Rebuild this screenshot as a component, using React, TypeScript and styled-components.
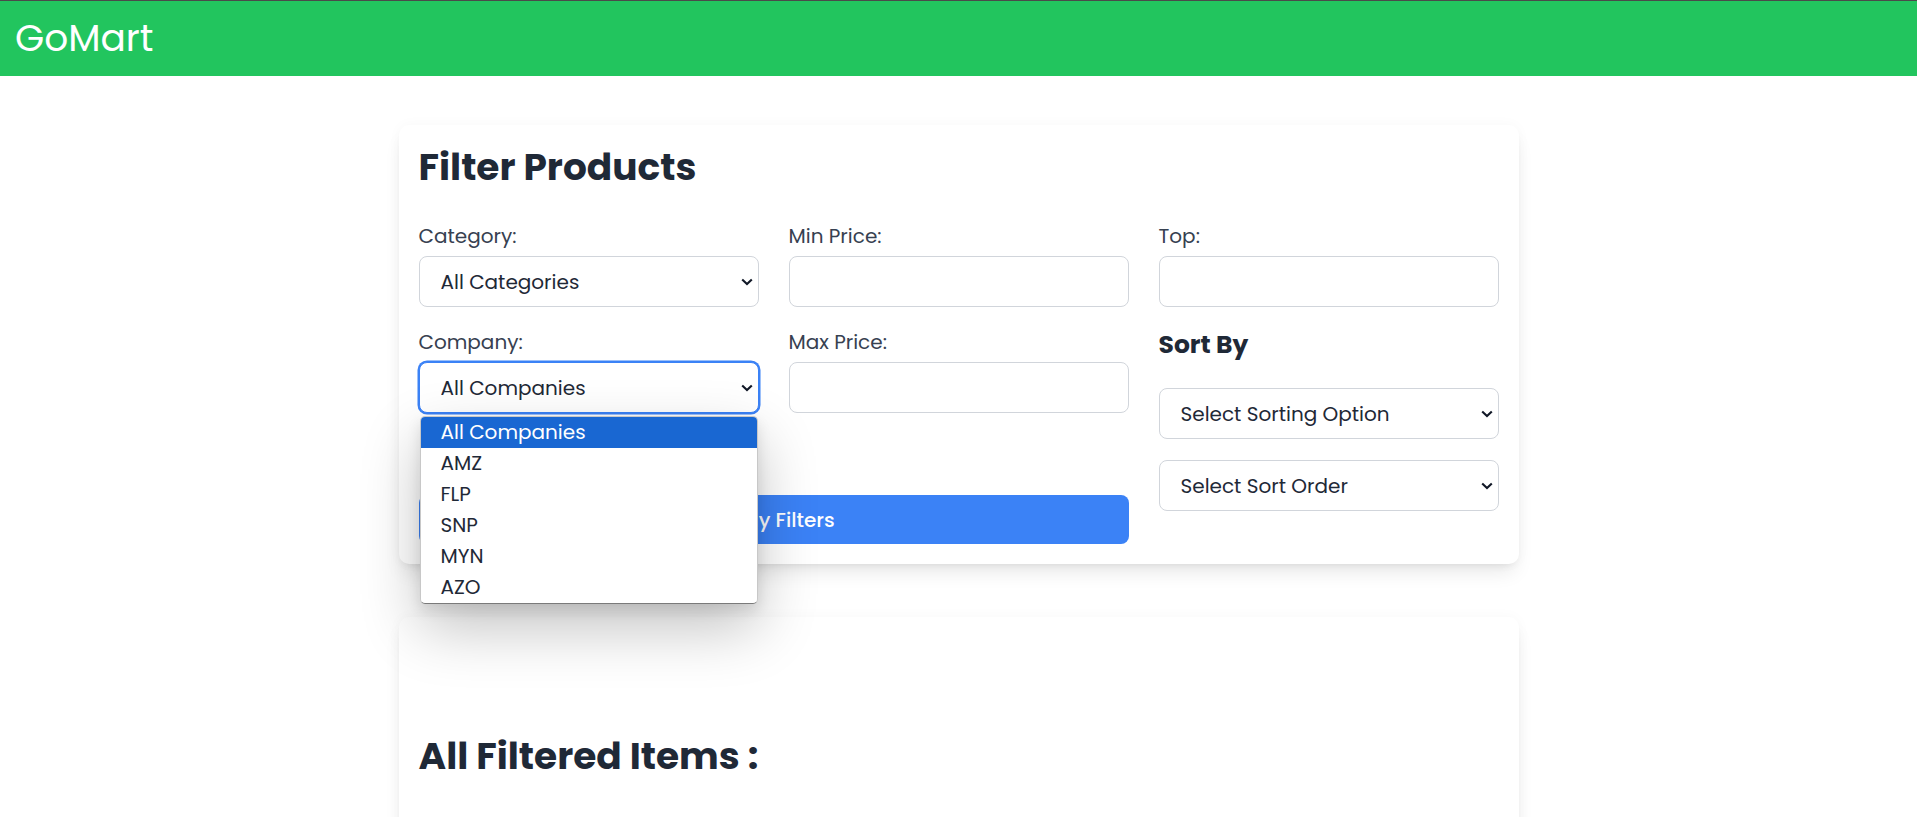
import React from "react";
import styled, { createGlobalStyle } from "styled-components";

const GlobalStyle = createGlobalStyle`
  * { box-sizing: border-box; }
  html, body { margin: 0; padding: 0; background: #ffffff; }
  body {
    font-family: "Poppins", "Inter", "Open Sans", sans-serif;
    color: #1f2937;
    overflow: hidden;
  }
`;

const Header = styled.header`
  height: 76px;
  border-top: 1px solid #4a4a4a;
  background: #22c55e;
  display: flex;
  align-items: center;
  padding: 0 15px;
`;

const Logo = styled.h1`
  margin: 0;
  font-size: 37.5px;
  font-weight: 400;
  line-height: 1;
  color: #ffffff;
`;

const Main = styled.main`
  width: 1120px;
  margin: 49px auto 0;
  display: flex;
  flex-direction: column;
  gap: 53px;
`;

const Card = styled.section<{ $tall?: boolean }>`
  background: #ffffff;
  border-radius: 10px;
  box-shadow: 0 12px 19px -4px rgba(0, 0, 0, 0.09), 0 5px 8px -5px rgba(0, 0, 0, 0.08),
    0 0 14px rgba(0, 0, 0, 0.03);
  padding: 20px;
  min-height: ${(p) => (p.$tall ? "400px" : "auto")};
`;

const CardTitle = styled.h2<{ $offset?: number }>`
  margin: ${(p) => p.$offset ?? 0}px 0 31px;
  font-size: 37.5px;
  font-weight: 700;
  line-height: 45px;
  color: #1f2937;
`;

const FilterGrid = styled.div`
  display: grid;
  grid-template-columns: repeat(3, 1fr);
  column-gap: 30px;
  align-items: start;
`;

const Column = styled.div<{ $span?: boolean }>`
  display: flex;
  flex-direction: column;
  grid-row: ${(p) => (p.$span ? "span 2" : "auto")};
`;

const Field = styled.div<{ $gap?: number }>`
  display: flex;
  flex-direction: column;
  margin-bottom: ${(p) => p.$gap ?? 20}px;
`;

const Label = styled.label`
  font-size: 20px;
  line-height: 30px;
  color: #374151;
  margin-bottom: 5px;
`;

const SubTitle = styled.h3`
  margin: 0 0 26px;
  font-size: 25px;
  line-height: 35px;
  font-weight: 700;
  color: #1f2937;
`;

const TextInput = styled.input`
  height: 51px;
  width: 100%;
  border: 1px solid #d1d5db;
  border-radius: 8px;
  background: #ffffff;
  font: inherit;
  font-size: 20px;
  padding: 0 20px;
  outline: none;
`;

const SelectWrap = styled.div`
  position: relative;
  width: 100%;
`;

const Select = styled.select<{ $focused?: boolean }>`
  appearance: none;
  -webkit-appearance: none;
  height: 51px;
  width: 100%;
  border: 1px solid ${(p) => (p.$focused ? "#3b82f6" : "#d1d5db")};
  box-shadow: ${(p) => (p.$focused ? "0 0 0 1.5px #3b82f6" : "none")};
  border-radius: 8px;
  background: #ffffff;
  font: inherit;
  font-size: 20px;
  color: #1f2937;
  padding: 0 30px 0 21px;
  outline: none;
`;

const Chevron = styled.svg`
  position: absolute;
  right: 6px;
  top: 50%;
  width: 12px;
  height: 8px;
  margin-top: -4px;
  pointer-events: none;
`;

const Dropdown = styled.ul`
  position: absolute;
  top: calc(100% + 3px);
  left: 1px;
  right: 1px;
  margin: 0;
  padding: 0;
  list-style: none;
  background: #ffffff;
  border: 1px solid #c8c8c8;
  border-bottom-color: #7a7a7a;
  border-radius: 5px;
  overflow: hidden;
  box-shadow: 0 24px 60px rgba(0, 0, 0, 0.24), 0 6px 14px rgba(0, 0, 0, 0.1);
  z-index: 10;
`;

const Option = styled.li<{ $active?: boolean }>`
  height: 31px;
  line-height: 31px;
  padding-left: 20px;
  font-size: 20px;
  color: ${(p) => (p.$active ? "#ffffff" : "#1f2937")};
  background: ${(p) => (p.$active ? "#1967d2" : "transparent")};
`;

const ApplyButton = styled.button`
  grid-column: span 2;
  margin-top: 62px;
  height: 49px;
  border: none;
  border-radius: 8px;
  background: #3b82f6;
  color: #ffffff;
  font: inherit;
  font-size: 20px;
  font-weight: 500;
  cursor: pointer;
`;

const ChevronIcon = () => (
  <Chevron viewBox="0 0 12 8" fill="none">
    <path d="M1.2 1.4 L6 6 L10.8 1.4" stroke="#111827" strokeWidth="2.1" />
  </Chevron>
);

const companies = ["All Companies", "AMZ", "FLP", "SNP", "MYN", "AZO"];

export default function App() {
  return (
    <>
      <GlobalStyle />
      <Header>
        <Logo>GoMart</Logo>
      </Header>
      <Main>
        <Card>
          <CardTitle>Filter Products</CardTitle>
          <FilterGrid>
            <Column>
              <Field>
                <Label>Category:</Label>
                <SelectWrap>
                  <Select defaultValue="all">
                    <option value="all">All Categories</option>
                  </Select>
                  <ChevronIcon />
                </SelectWrap>
              </Field>
              <Field>
                <Label>Company:</Label>
                <SelectWrap>
                  <Select $focused defaultValue="all">
                    <option value="all">All Companies</option>
                  </Select>
                  <ChevronIcon />
                  <Dropdown>
                    {companies.map((c, i) => (
                      <Option key={c} $active={i === 0}>
                        {c}
                      </Option>
                    ))}
                  </Dropdown>
                </SelectWrap>
              </Field>
            </Column>
            <Column>
              <Field>
                <Label>Min Price:</Label>
                <TextInput type="number" />
              </Field>
              <Field>
                <Label>Max Price:</Label>
                <TextInput type="number" />
              </Field>
            </Column>
            <Column $span>
              <Field>
                <Label>Top:</Label>
                <TextInput type="number" />
              </Field>
              <SubTitle>Sort By</SubTitle>
              <Field $gap={21}>
                <SelectWrap>
                  <Select defaultValue="">
                    <option value="">Select Sorting Option</option>
                  </Select>
                  <ChevronIcon />
                </SelectWrap>
              </Field>
              <Field $gap={0}>
                <SelectWrap>
                  <Select defaultValue="">
                    <option value="">Select Sort Order</option>
                  </Select>
                  <ChevronIcon />
                </SelectWrap>
              </Field>
            </Column>
            <ApplyButton>Apply Filters</ApplyButton>
          </FilterGrid>
        </Card>
        <Card $tall>
          <CardTitle $offset={97}>All Filtered Items :</CardTitle>
        </Card>
      </Main>
    </>
  );
}
